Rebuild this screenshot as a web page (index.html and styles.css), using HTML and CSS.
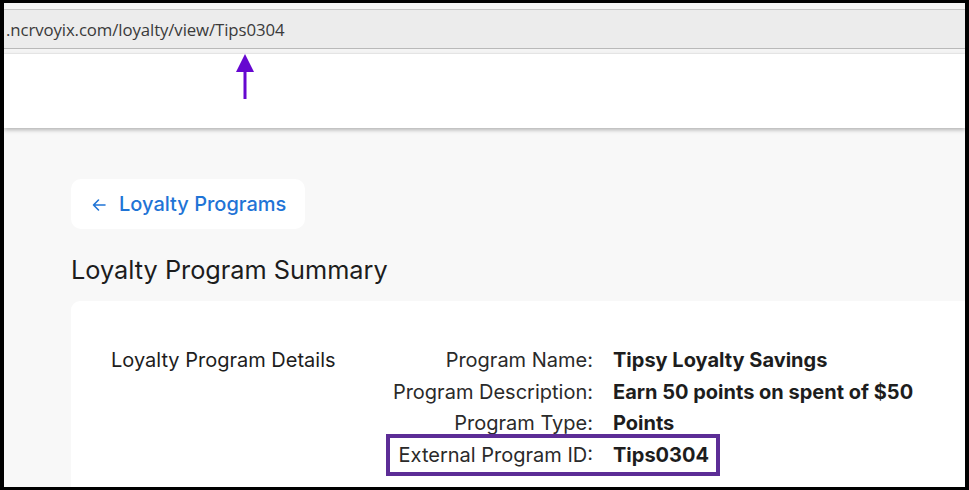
FILE: index.html
```html
<!DOCTYPE html>
<html>
<head>
<meta charset="utf-8">
<link rel="stylesheet" href="styles.css">
</head>
<body>
<div class="screen">
  <div class="chrome">
    <div class="addr"><span class="url">.ncrvoyix.com/loyalty/view/Tips0304</span></div>
  </div>
  <div class="header">
    <svg class="pointer" width="20" height="46" viewBox="0 0 20 46">
      <polygon points="10,0 19,18 1,18" fill="#6607d0"/>
      <rect x="8.5" y="16" width="3" height="29" fill="#6607d0"/>
    </svg>
  </div>
  <main class="main">
    <a class="back">
      <svg class="back-icon" width="16" height="16" viewBox="0 0 16 16">
        <path d="M14 8H2.5M7.5 3L2.5 8l5 5" fill="none" stroke="#1f74d6" stroke-width="1.6" stroke-linecap="round" stroke-linejoin="round"/>
      </svg>
      <span>Loyalty Programs</span>
    </a>
    <h1 class="title">Loyalty Program Summary</h1>
    <section class="card">
      <div class="section-name">Loyalty Program Details</div>
      <div class="details">
        <div class="label">Program Name:</div><div class="value">Tipsy Loyalty Savings</div>
        <div class="label">Program Description:</div><div class="value">Earn 50 points on spent of $50</div>
        <div class="label">Program Type:</div><div class="value">Points</div>
        <div class="label hl">External Program ID:<span class="hl-box"></span></div><div class="value">Tips0304</div>
      </div>
    </section>
  </main>
</div>
</body>
</html>
```
FILE: styles.css
```css
* { box-sizing: border-box; }
html, body { margin: 0; padding: 0; }
body {
  background: #000;
  width: 969px;
  height: 490px;
  overflow: hidden;
  font-family: Inter, "Noto Sans", sans-serif;
}
.screen {
  margin: 3px 4px 0 4px;
  height: 484px;
  background: #f8f8f8;
  overflow: hidden;
  display: flex;
  flex-direction: column;
}
.chrome {
  background: #f4f4f4;
  padding-top: 6px;
  padding-bottom: 4px;
  border-bottom: 1px solid #ececec;
}
.addr {
  height: 40px;
  background: #ececec;
  border-top: 1px solid #c6c6c6;
  border-bottom: 1px solid #b9b9b9;
  display: flex;
  align-items: center;
  overflow: hidden;
}
.url {
  font-family: "Open Sans", "Noto Sans", sans-serif;
  font-size: 16.8px;
  color: #3a3a3a;
  margin-left: 2px;
  white-space: nowrap;
  letter-spacing: -0.1px;
}
.header {
  height: 74px;
  background: #fff;
  box-shadow: 0 2px 4px rgba(0,0,0,0.28);
  position: relative;
  z-index: 1;
}
.pointer {
  position: absolute;
  left: 231px;
  top: 0;
}
.main {
  flex: 1;
  padding: 51px 0 0 67px;
  display: flex;
  flex-direction: column;
  align-items: flex-start;
}
.back {
  display: flex;
  align-items: center;
  gap: 12px;
  height: 50px;
  padding: 0 19px 0 20px;
  background: #fff;
  border-radius: 10px;
  color: #1f74d6;
  font-size: 20px;
  font-weight: 500;
}
.back-icon { margin-top: 1px; }
.title {
  margin: 26px 0 0 0;
  font-size: 25.3px;
  font-weight: 400;
  color: #1d1d1d;
  line-height: 30px;
}
.card {
  margin-top: 16px;
  align-self: stretch;
  background: #fff;
  border-radius: 9px 0 0 0;
  display: flex;
  padding: 44px 0 0 40px;
  flex: 1;
}
.section-name {
  width: 223px;
  flex-shrink: 0;
  white-space: nowrap;
  font-size: 20px;
  color: #1d1d1d;
  line-height: 31px;
}
.details {
  display: grid;
  grid-template-columns: 259px auto;
  column-gap: 20px;
  row-gap: 0.6px;
  align-content: start;
}
.label {
  text-align: right;
  font-size: 20px;
  color: #2a2a2a;
  line-height: 31px;
  position: relative;
  white-space: nowrap;
}
.value {
  font-size: 20px;
  font-weight: 700;
  color: #1d1d1d;
  line-height: 31px;
  white-space: nowrap;
}
.hl-box {
  position: absolute;
  left: 52px;
  top: -6px;
  width: 334px;
  height: 42px;
  border: 4px solid #5c2d96;
}
```
